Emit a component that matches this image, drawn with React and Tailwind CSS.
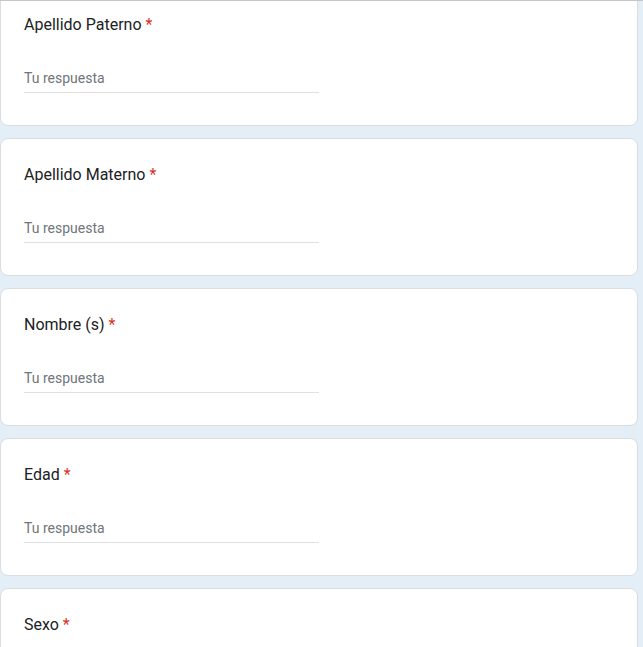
import React from 'react';

const fields = ['Apellido Paterno', 'Apellido Materno', 'Nombre (s)', 'Edad', 'Sexo'];

const QuestionCard = ({ label }) => (
  <div className="shrink-0 w-[638px] bg-white border border-[#dadce0] rounded-lg px-[23px] pt-[24px] pb-[32px]">
    <div className="text-base leading-6 text-[#202124]">
      {label} <span className="text-[#d93025]">*</span>
    </div>
    <div className="mt-[31px] w-[295px] border-b border-[#e0e0e0] pb-1 text-sm leading-5 text-[#70757a]">
      Tu respuesta
    </div>
  </div>
);

export default function App() {
  return (
    <div
      className="relative h-[647px] w-[643px] overflow-hidden bg-[#e4eef6]"
      style={{ fontFamily: 'Roboto, "Liberation Sans", sans-serif' }}
    >
      <div className="-mt-[12px] flex flex-col gap-3">
        {fields.map(f => (
          <QuestionCard key={f} label={f} />
        ))}
      </div>
      <div className="absolute top-0 left-0 right-0 h-px bg-[#c4c7c5]" />
    </div>
  );
}
